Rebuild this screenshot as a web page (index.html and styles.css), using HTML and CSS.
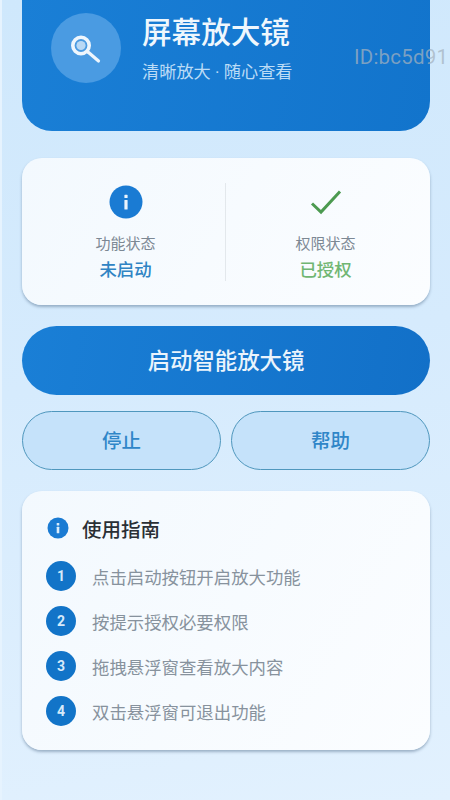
FILE: index.html
```html
<!DOCTYPE html>
<html lang="zh-CN">
<head>
    <meta charset="UTF-8">
    <meta name="viewport" content="width=device-width, initial-scale=1.0">
    <title>屏幕放大镜</title>
    <link rel="stylesheet" href="styles.css">
</head>
<body>
    <div class="page">
        <div class="header">
            <div class="header-icon">
                <svg width="36" height="36" viewBox="0 0 36 36" fill="none" stroke="#eef6fd" stroke-linecap="round">
                    <circle cx="13" cy="15.5" r="8.2" stroke-width="3.6"/>
                    <circle cx="13" cy="15.5" r="4.6" fill="#b9d9f5" stroke="none"/>
                    <path d="M20 22 L30.5 31" stroke-width="3.2"/>
                </svg>
            </div>
            <div class="header-text">
                <div class="header-title">屏幕放大镜</div>
                <div class="header-sub">清晰放大 · 随心查看</div>
            </div>
        </div>

        <div class="card status">
            <div class="status-item">
                <svg class="status-icon" width="34" height="34" viewBox="0 0 34 34">
                    <circle cx="17" cy="17" r="16.5" fill="#1a7bd3"/>
                    <rect x="15.4" y="15" width="3.2" height="9.5" rx="0.6" fill="#eaf4fd"/>
                    <rect x="15.4" y="9.8" width="3.2" height="3.2" rx="0.6" fill="#eaf4fd"/>
                </svg>
                <div class="status-label">功能状态</div>
                <div class="status-value off">未启动</div>
            </div>
            <div class="status-line"></div>
            <div class="status-item">
                <svg class="status-icon" width="34" height="34" viewBox="0 0 34 34" fill="none">
                    <path d="M3 18.5 L12 27 L31 6.5" stroke="#4c9a50" stroke-width="3"/>
                </svg>
                <div class="status-label">权限状态</div>
                <div class="status-value on">已授权</div>
            </div>
        </div>

        <div class="btn-main">启动智能放大镜</div>

        <div class="btn-row">
            <div class="btn-small">停止</div>
            <div class="btn-small">帮助</div>
        </div>

        <div class="card guide">
            <div class="guide-head">
                <svg width="22" height="22" viewBox="0 0 22 22">
                    <circle cx="11" cy="11" r="10.5" fill="#1a7bd3"/>
                    <rect x="9.7" y="9.8" width="2.6" height="6.4" rx="0.5" fill="#d9ecfb"/>
                    <rect x="9.7" y="6" width="2.6" height="2.6" rx="0.5" fill="#d9ecfb"/>
                </svg>
                <span class="guide-title">使用指南</span>
            </div>
            <div class="step"><span class="step-num">1</span><span class="step-text">点击启动按钮开启放大功能</span></div>
            <div class="step"><span class="step-num">2</span><span class="step-text">按提示授权必要权限</span></div>
            <div class="step"><span class="step-num">3</span><span class="step-text">拖拽悬浮窗查看放大内容</span></div>
            <div class="step"><span class="step-num">4</span><span class="step-text">双击悬浮窗可退出功能</span></div>
        </div>
    </div>
    <div class="watermark">ID:bc5d91</div>
</body>
</html>
```
FILE: styles.css
```css
html, body {
    margin: 0;
    height: 800px;
    overflow: hidden;
}
body {
    position: relative;
    border-left: 2px solid #e6f3fe;
    font-family: "Roboto", "Noto Sans CJK SC", sans-serif;
    background: linear-gradient(170deg, #cfe8fc 0%, #d6ebfd 45%, #e2f1fe 100%);
}
.page {
    display: flex;
    flex-direction: column;
    padding: 0 20px 0 20px;
}
.header {
    display: flex;
    align-items: center;
    box-sizing: border-box;
    height: 164px;
    margin-top: -33px;
    padding: 0 0 2px 29px;
    border-radius: 30px;
    background: linear-gradient(100deg, #1a7fd6 0%, #1274cc 100%);
}
.header-icon {
    display: flex;
    justify-content: center;
    align-items: center;
    width: 70px;
    height: 70px;
    border-radius: 50%;
    background: #4a9be2;
}
.header-text {
    margin-left: 21px;
}
.header-title {
    color: #eff7fd;
    font-size: 29.6px;
    line-height: 40px;
    font-weight: 500;
}
.header-sub {
    margin-top: 8px;
    color: #bcdcf6;
    font-size: 17.2px;
    line-height: 22px;
}
.card {
    border-radius: 20px;
    background: linear-gradient(120deg, #f3f9fe 0%, #fbfdff 100%);
    box-shadow: 0 2px 3px rgba(70, 100, 130, 0.45);
}
.status {
    display: flex;
    align-items: center;
    box-sizing: border-box;
    height: 147px;
    margin-top: 27px;
    padding: 0 5px 0 4px;
}
.status-item {
    flex: 1;
    display: flex;
    flex-direction: column;
    align-items: center;
}
.status-icon {
    margin-top: 4px;
}
.status-label {
    margin-top: 14px;
    color: #7c8894;
    font-size: 15px;
    line-height: 22px;
}
.status-value {
    margin-top: 2px;
    font-size: 17.4px;
    line-height: 26px;
    font-weight: 500;
}
.off {
    color: #2f84c4;
}
.on {
    color: #70b673;
}
.status-line {
    width: 1px;
    height: 98px;
    background: #e3e8ec;
}
.btn-main {
    display: flex;
    justify-content: center;
    align-items: center;
    box-sizing: border-box;
    height: 69px;
    margin-top: 21px;
    padding-bottom: 3px;
    border-radius: 35px;
    color: #eaf4fc;
    font-size: 22.4px;
    font-weight: 500;
    background: linear-gradient(100deg, #1a7fd6 0%, #1270c8 100%);
}
.btn-row {
    display: flex;
    gap: 10px;
    margin-top: 16px;
}
.btn-small {
    flex: 1;
    display: flex;
    justify-content: center;
    align-items: center;
    box-sizing: border-box;
    height: 59px;
    padding-bottom: 2px;
    border: 1.5px solid #4f97bd;
    border-radius: 30px;
    color: #2f86c8;
    font-size: 19.5px;
    font-weight: 500;
    background: #c5e2fa;
}
.guide {
    height: 259px;
    box-sizing: border-box;
    margin-top: 21px;
    padding: 22px 0 0 24px;
}
.guide-head {
    display: flex;
    align-items: center;
    height: 30px;
    margin-left: 1px;
    margin-bottom: 18px;
}
.guide-title {
    margin-left: 13px;
    color: #2a2f35;
    font-size: 19.5px;
    font-weight: 500;
}
.step {
    display: flex;
    align-items: center;
    height: 30px;
    margin-bottom: 15px;
}
.step-num {
    display: flex;
    justify-content: center;
    align-items: center;
    width: 30px;
    height: 30px;
    border-radius: 50%;
    color: #d6eafa;
    font-size: 14px;
    font-weight: 700;
    background: #1274c8;
}
.step-text {
    margin-left: 16px;
    color: #87929d;
    font-size: 17.4px;
}
.watermark {
    position: absolute;
    top: 45px;
    left: 352px;
    color: rgba(165, 178, 190, 0.72);
    font-size: 20.5px;
    line-height: 24px;
    letter-spacing: 0.2px;
}
```
